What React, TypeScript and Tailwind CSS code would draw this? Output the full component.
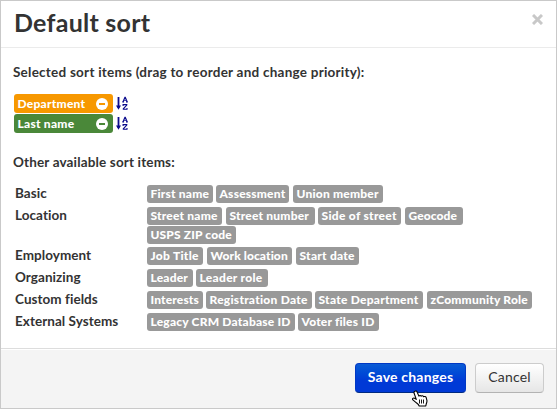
type Chip = { text: string; box: string };

const groups: { name: string; height: string; chips: Chip[] }[] = [
  {
    name: "Basic",
    height: "h-[22px]",
    chips: [
      { text: "First name", box: "w-[66px] mr-[3px] tracking-[0.2px]" },
      { text: "Assessment", box: "w-[73px] mr-[4px] tracking-[0.2px]" },
      { text: "Union member", box: "w-[90px] tracking-[0.2px]" },
    ],
  },
  {
    name: "Location",
    height: "h-[40px]",
    chips: [
      { text: "Street name", box: "w-[75px] mr-[4px] tracking-[0.2px]" },
      { text: "Street number", box: "w-[89px] mr-[3px] tracking-[0.2px]" },
      { text: "Side of street", box: "w-[83px] mr-[4px] tracking-[0.3px]" },
      { text: "Geocode", box: "w-[58px] mr-[4px] tracking-[0.1px]" },
      { text: "USPS ZIP code", box: "w-[89px] tracking-[0.15px]" },
    ],
  },
  {
    name: "Employment",
    height: "h-[22px]",
    chips: [
      { text: "Job Title", box: "w-[56px] mr-[4px] tracking-[0.3px]" },
      { text: "Work location", box: "w-[85px] mr-[4px] tracking-[0.1px]" },
      { text: "Start date", box: "w-[63px] tracking-[0.25px]" },
    ],
  },
  {
    name: "Organizing",
    height: "h-[22px]",
    chips: [
      { text: "Leader", box: "w-[46px] mr-[3px] tracking-[0.2px]" },
      { text: "Leader role", box: "w-[72px] tracking-[0.3px]" },
    ],
  },
  {
    name: "Custom fields",
    height: "h-[22px]",
    chips: [
      { text: "Interests", box: "w-[56px] mr-[3px] tracking-[0.15px]" },
      { text: "Registration Date", box: "w-[106px] mr-[3px] tracking-[0.25px]" },
      { text: "State Department", box: "w-[108px] mr-[4px] tracking-[0.25px]" },
      { text: "zCommunity Role", box: "w-[105px] tracking-[0.2px]" },
    ],
  },
  {
    name: "External Systems",
    height: "h-[22px]",
    chips: [
      { text: "Legacy CRM Database ID", box: "w-[148px] mr-[3px] tracking-[0.2px]" },
      { text: "Voter files ID", box: "w-[81px] tracking-[0.2px]" },
    ],
  },
];

function SortIcon() {
  return (
    <svg className="ml-[3px] h-[15px] w-[12px]" viewBox="0 0 12 15" fill="none" stroke="#0a0a8c">
      <path d="M2.5 1v11" strokeWidth="1.8" />
      <path d="M0 9.6h5L2.5 13.8z" fill="#0a0a8c" stroke="none" />
      <path d="M7 5.6 8.9 1.3h.4l1.9 4.3M7.7 4.2h2.8M6.3 5.9h1.8M10 5.9h1.8" strokeWidth="1.1" />
      <path d="M7.1 10V8.6h3.7v.5L7.3 12.8v.5h3.7V12" strokeWidth="1.1" />
    </svg>
  );
}

function SelectedItem({ text, color }: { text: string; color: string }) {
  return (
    <div className="flex h-[19px] items-center">
      <div className={`flex h-[19px] w-[99px] items-center justify-between rounded-[3px] pl-[3.5px] pr-[5px] text-[12px] leading-[19px] font-black tracking-[0.25px] text-white ${color}`}>
        <span className="-mt-[1px] whitespace-nowrap">{text}</span>
        <span className="mt-[1px] flex h-[12px] w-[12px] items-center justify-center rounded-full bg-white">
          <span className={`h-[2px] w-[6px] ${color}`} />
        </span>
      </div>
      <SortIcon />
    </div>
  );
}

function HandCursor() {
  return (
    <svg className="absolute left-[411px] top-[389px] h-[17px] w-[16px]" viewBox="0 0 16 17" fill="#fff" stroke="#000" strokeWidth="1.1" strokeLinejoin="round">
      <path d="M2.9 1.2c1-.6 1.9 0 2.3 1l1.7 3.9c.5-.8 1.9-.8 2.3.1.7-.7 2-.5 2.4.5.9-.6 2.3 0 2.6 1l.7 2.6c.3 1.5-.4 2.7-.7 3.8l-.4 1.9H7.2c-.5-1.4-1.6-2.3-2.8-3.2L.9 9.9c-1-1.2.4-2.4 1.7-1.6l1.7 1.1-2.2-6.1c-.3-.9 0-1.7.8-2.1z" />
      <path d="M7.5 9.5v4M9.5 9.5v4M11.5 9.5v4" strokeWidth=".9" />
    </svg>
  );
}

export default function App() {
  return (
    <div className="relative flex h-[409px] w-[557px] flex-col overflow-hidden border border-[#c9c9c9] bg-white font-['Lato',sans-serif] text-[#333]">
      <header className="flex h-[47px] shrink-0 items-start justify-between border-b border-[#ebebeb] pl-[13px] pr-[13px]">
        <h1 className="mt-[6px] text-[25px] leading-[31px] font-bold tracking-[0.25px] whitespace-nowrap">Default sort</h1>
        <svg className="mt-[13px] h-[11px] w-[11px]" viewBox="0 0 11 11" stroke="#c8c8c8" strokeWidth="3">
          <path d="M1 1l9 9M10 1l-9 9" />
        </svg>
      </header>
      <main className="flex h-[300px] shrink-0 flex-col pl-[13px]">
        <p className="-ml-[1px] mt-[14px] h-[20px] text-[13.5px] leading-[20px] font-bold tracking-[0.24px] whitespace-nowrap">
          Selected sort items (drag to reorder and change priority):
        </p>
        <div className="mt-[12px] flex flex-col gap-px">
          <SelectedItem text="Department" color="bg-[#f79800]" />
          <SelectedItem text="Last name" color="bg-[#4a8839]" />
        </div>
        <p className="-ml-[1px] mt-[19px] h-[20px] text-[13.5px] leading-[20px] font-bold tracking-[0.15px] whitespace-nowrap">
          Other available sort items:
        </p>
        <div className="mt-[13px] flex flex-col">
          {groups.map((g) => (
            <div key={g.name} className={`flex items-start ${g.height}`}>
              <div className="-mt-px w-[133px] pl-px text-[13.5px] leading-[18px] font-bold tracking-[0.05px] whitespace-nowrap">{g.name}</div>
              <div className="flex w-[400px] flex-wrap gap-y-px">
                {g.chips.map((c) => (
                  <span key={c.text} className={`flex h-[18px] shrink-0 items-center rounded-[3px] bg-[#999] pl-[3.5px] text-[12px] leading-[18px] font-black whitespace-nowrap text-white ${c.box}`}>
                    {c.text}
                  </span>
                ))}
              </div>
            </div>
          ))}
        </div>
      </main>
      <footer className="flex grow items-start justify-end gap-[9px] border-t border-[#ddd] bg-[#f4f4f4] pt-[14px] pr-[12px] shadow-[inset_0_1px_0_#fff]">
        <button className="flex h-[30px] w-[111px] justify-center rounded-[4px] border border-[#0038c4] border-b-[#002a80] bg-linear-to-b from-[#0b5bd5] to-[#0039d6] to-60% text-[14px] leading-[26px] font-bold tracking-[0.2px] whitespace-nowrap text-white">
          Save changes
        </button>
        <button className="flex h-[30px] w-[69px] justify-center rounded-[4px] border border-[#ccc] border-b-[#b3b3b3] bg-linear-to-b from-white to-[#e6e6e6] text-[14px] leading-[26px] tracking-[0.2px] whitespace-nowrap">
          Cancel
        </button>
      </footer>
      <HandCursor />
    </div>
  );
}
